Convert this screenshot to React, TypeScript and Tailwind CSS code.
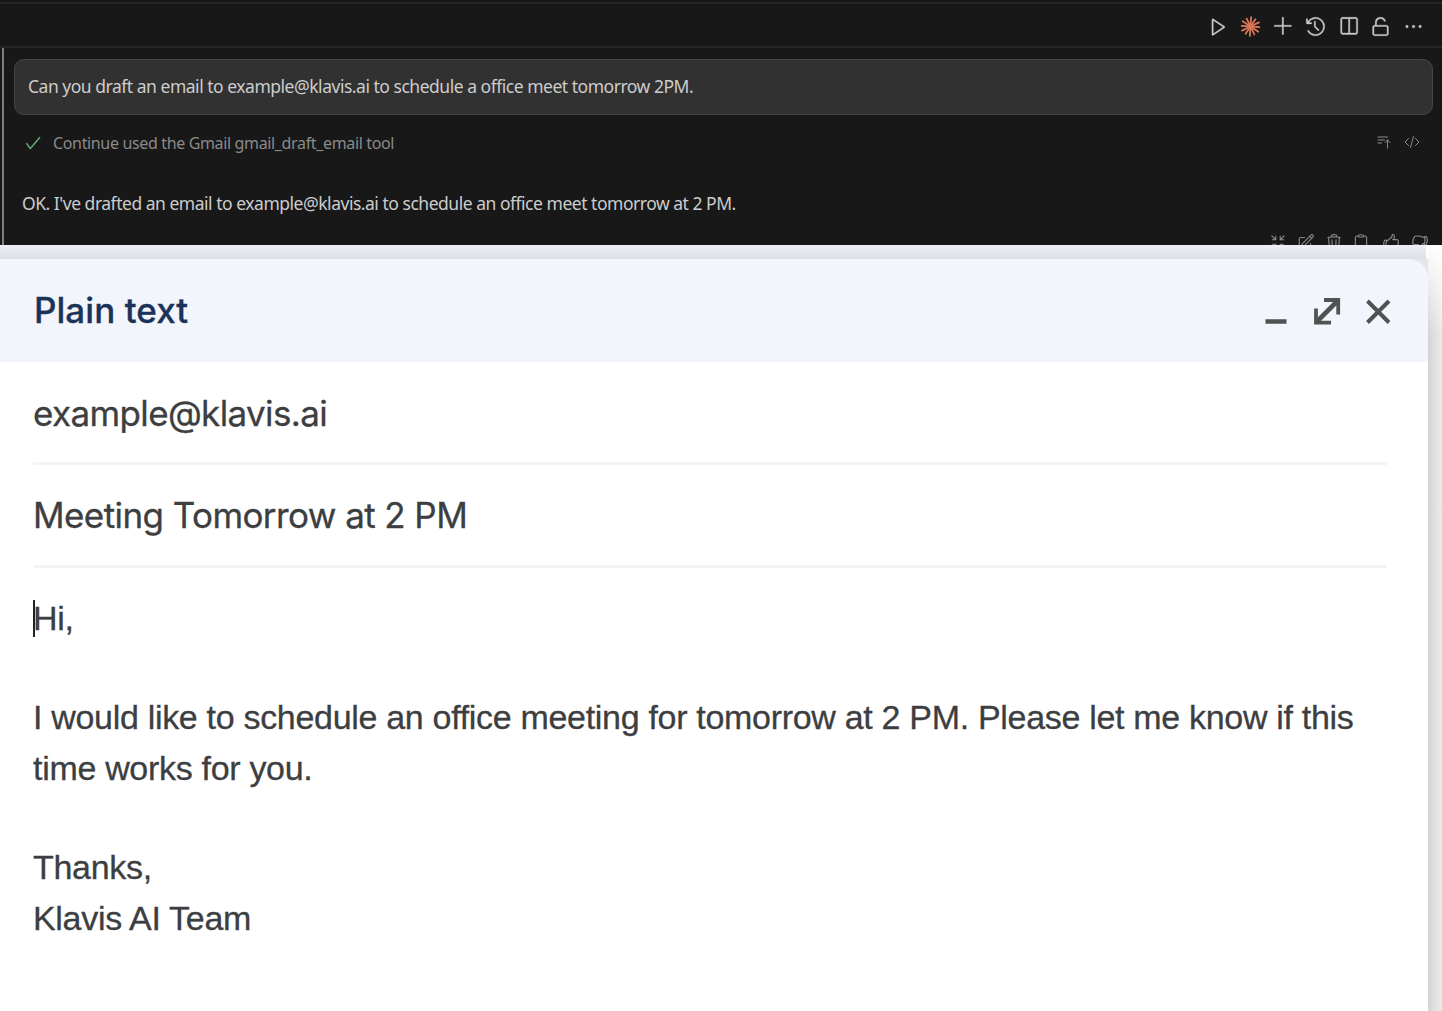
import { VscPlay, VscAdd, VscHistory, VscSplitHorizontal, VscUnlock, VscEllipsis, VscCheck } from "react-icons/vsc";
import {
  HiOutlineArrowsPointingIn,
  HiOutlinePencilSquare,
  HiOutlineTrash,
  HiOutlineClipboard,
  HiOutlineHandThumbUp,
  HiOutlineHandThumbDown,
  HiOutlineBarsArrowUp,
  HiOutlineCodeBracket,
} from "react-icons/hi2";

const rays = [0, 30, 60, 90, 120, 150, 180, 210, 240, 270, 300, 330];

function Burst() {
  return (
    <svg width="21" height="21" viewBox="-10.5 -10.5 21 21" stroke="#d97757" strokeWidth="1.8" strokeLinecap="round">
      {rays.map((a, i) => (
        <line key={a} x1="0" y1="0" x2={i % 2 ? 9.4 : 8.8} y2="0" transform={`rotate(${a + 4})`} />
      ))}
    </svg>
  );
}

function Toolbar() {
  return (
    <header className="mt-[2px] flex h-[46px] shrink-0 items-center justify-end gap-[11.5px] border-y-2 border-[#262626] pt-[2px] pr-[18.5px] text-[21px]">
      <VscPlay strokeWidth={0.3} />
      <Burst />
      <VscAdd strokeWidth={0.3} />
      <VscHistory strokeWidth={0.3} />
      <VscSplitHorizontal strokeWidth={0.3} />
      <VscUnlock strokeWidth={0.3} />
      <VscEllipsis strokeWidth={0.3} />
    </header>
  );
}

function ChatPanel() {
  return (
    <section className="flex h-[245px] shrink-0 flex-col overflow-hidden bg-[#181818] font-['Noto_Sans',sans-serif] text-[#cccccc]">
      <Toolbar />
      <div className="ml-[2px] flex grow flex-col border-l-2 border-[#808080] pt-[11px] pr-[9px] pl-[10px]">
        <div className="flex h-14 shrink-0 items-center rounded-[10px] border border-[#454545] bg-[#313131] pb-[2px] pl-[13px] text-[17.5px] tracking-[-0.48px] whitespace-nowrap">
          Can you draft an email to example@klavis.ai to schedule a office meet tomorrow 2PM.
        </div>
        <div className="mt-4 flex h-6 shrink-0 items-center pr-[13px] pl-[10px] text-[16px] text-[#8a8a8a]">
          <VscCheck className="mr-[11px] text-[18px] text-[#6fb877]" strokeWidth={0.3} />
          <p className="grow tracking-[-0.35px] whitespace-nowrap">Continue used the Gmail gmail_draft_email tool</p>
          <HiOutlineBarsArrowUp className="mr-3 mb-0.5" />
          <HiOutlineCodeBracket className="mb-0.5" />
        </div>
        <p className="mt-9 h-6 shrink-0 pl-2 text-[17.5px] leading-6 tracking-[-0.48px] whitespace-nowrap">
          OK. I've drafted an email to example@klavis.ai to schedule an office meet tomorrow at 2 PM.
        </p>
        <div className="mt-[18px] flex shrink-0 justify-end gap-[10px] pr-1 text-[18px] text-[#8a8a8a]">
          <HiOutlineArrowsPointingIn />
          <HiOutlinePencilSquare />
          <HiOutlineTrash />
          <HiOutlineClipboard className="-ml-px" />
          <HiOutlineHandThumbUp className="ml-[2px]" />
          <HiOutlineHandThumbDown className="ml-px" />
        </div>
      </div>
    </section>
  );
}

function WindowControls() {
  return (
    <div className="flex gap-[23px] text-[#4f5352]">
      <svg width="28" height="28" viewBox="0 0 28 28" stroke="currentColor" strokeWidth="4.4">
        <path d="M3.5 24.5h21" />
      </svg>
      <svg width="28" height="28" viewBox="0 0 28 28" fill="none" stroke="currentColor" strokeWidth="3.8">
        <path d="M11 3h14.2v14.4M3 11.5v14.2h15" />
        <path d="M4 24.5L24.5 4" strokeWidth="4.6" />
      </svg>
      <svg width="28" height="28" viewBox="0 0 28 28" fill="none" stroke="currentColor" strokeWidth="4">
        <path d="M3.5 4L25 25.5M25 4L3.5 25.5" />
      </svg>
    </div>
  );
}

export default function App() {
  return (
    <div className="flex h-[1011px] w-[1442px] flex-col overflow-hidden bg-white">
      <ChatPanel />
      <section className="flex grow bg-white">
        <div className="flex w-[1428px] shrink-0 flex-col">
          <div className="h-[14px] w-[1426px] shrink-0 bg-linear-to-b from-[#eff0f5] to-[#dcdfe5]" />
          <div className="flex grow flex-col bg-[#e3e5ea]">
            <div className="flex grow flex-col overflow-hidden rounded-tr-[20px] bg-white font-['Inter',sans-serif] text-[35px] text-[#3c3e41] [-webkit-text-stroke:0.3px]">
              <div className="flex h-[103px] shrink-0 items-center justify-between bg-[#f2f5fc] pr-[36.5px] pl-[34px]">
                <h1 className="font-medium tracking-[0.05px] text-[#1b3358]">Plain text</h1>
                <WindowControls />
              </div>
              <div className="ml-[33px] flex h-[103px] w-[1354px] shrink-0 items-center border-b-3 border-[#f4f4f4] pt-[2px] tracking-[-0.63px]">
                example@klavis.ai
              </div>
              <div className="ml-[33px] flex h-[103px] w-[1354px] shrink-0 items-center border-b-3 border-[#f4f4f4] pt-px tracking-[-0.58px]">
                Meeting Tomorrow at 2 PM
              </div>
              <div className="relative space-y-12 pt-[25px] pl-[33px] font-['Liberation_Sans',sans-serif] text-[34px] leading-[51px] tracking-[-0.31px] whitespace-nowrap">
                <p>Hi,</p>
                <p>
                  I would like to schedule an office meeting for tomorrow at 2 PM. Please let me know if this
                  <br />
                  time works for you.
                </p>
                <p>
                  Thanks,
                  <br />
                  Klavis AI Team
                </p>
                <div className="absolute top-[32px] left-[33px] h-[37px] w-[2px] bg-[#222222]" />
              </div>
            </div>
          </div>
        </div>
        <div className="grow bg-linear-to-r from-[#d4d4d4] to-[#ececec]">
          <div className="h-[90px] bg-linear-to-b from-white to-transparent" />
        </div>
      </section>
    </div>
  );
}
